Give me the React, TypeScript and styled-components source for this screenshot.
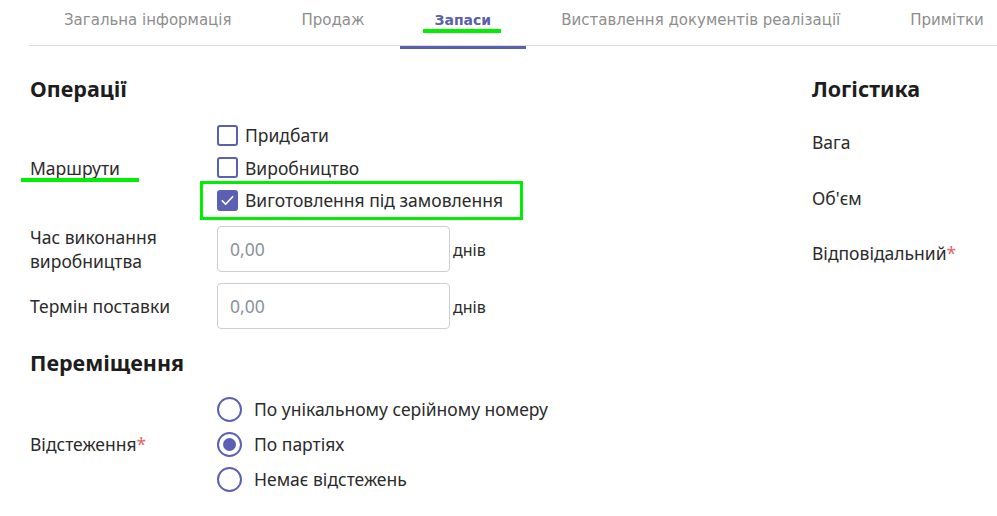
import React from "react";
import styled, { createGlobalStyle } from "styled-components";

const Global = createGlobalStyle`
  html, body { margin: 0; padding: 0; background: #fff; }
  body { font-family: "Noto Sans", "Open Sans", sans-serif; color: #212529; }
  * { box-sizing: border-box; }
`;

const Page = styled.div`
  width: 997px;
  height: 516px;
  overflow: hidden;
  position: relative;
`;

const TabBar = styled.div`
  display: flex;
  margin-left: 29px;
  height: 46px;
  border-bottom: 1px solid #dcdcdc;
`;

const Tab = styled.div<{ $active?: boolean }>`
  position: relative;
  padding: 10px 35px 0;
  height: 46px;
  font-family: "DejaVu Sans", Verdana, sans-serif;
  font-size: ${(p) => (p.$active ? 14 : 15)}px;
  line-height: 20px;
  white-space: nowrap;
  color: ${(p) => (p.$active ? "#5a5fb0" : "#8e8e8e")};
  font-weight: ${(p) => (p.$active ? 700 : 400)};
  ${(p) =>
    p.$active &&
    `&::after { content: ""; position: absolute; left: 0; right: 0; bottom: -3px; height: 3px; background: #5a5fb0; }`}
`;

const GreenLine = styled.span<{ $left: number; $top: number; $width: number }>`
  position: absolute;
  left: ${(p) => p.$left}px;
  top: ${(p) => p.$top}px;
  width: ${(p) => p.$width}px;
  height: 4px;
  background: #00ee00;
`;

const Content = styled.div`
  display: grid;
  grid-template-columns: 782px 1fr;
  padding-left: 30px;
`;

const Column = styled.div`
  display: flex;
  flex-direction: column;
`;

const Heading = styled.h2<{ $mt: number }>`
  margin: ${(p) => p.$mt}px 0 0;
  font-size: 21.5px;
  line-height: 26px;
  font-weight: 700;
  color: #1d1d1d;
  white-space: nowrap;
`;

const FormRow = styled.div<{ $mt: number }>`
  display: grid;
  grid-template-columns: 187px 1fr;
  align-items: center;
  margin-top: ${(p) => p.$mt}px;
`;

const Label = styled.div`
  position: relative;
  font-size: 17.5px;
  line-height: 24px;
  color: #2b2b2b;
  white-space: nowrap;
`;

const Req = styled.span`
  color: #e8646a;
`;

const Options = styled.div<{ $h: number }>`
  display: flex;
  flex-direction: column;
  & > * { height: ${(p) => p.$h}px; }
`;

const OptionRow = styled.label`
  position: relative;
  display: flex;
  align-items: center;
  gap: 7px;
  font-size: 17.5px;
  color: #2b2b2b;
  white-space: nowrap;
`;

const Checkbox = styled.span<{ $checked?: boolean }>`
  width: 21px;
  height: 21px;
  border: 2px solid #5c60b4;
  border-radius: 3px;
  background: ${(p) => (p.$checked ? "#5c60b4" : "#fff")};
  display: flex;
  align-items: center;
  justify-content: center;
`;

const Radio = styled.span<{ $checked?: boolean }>`
  width: 25px;
  height: 25px;
  border: 2px solid #5c60b4;
  border-radius: 50%;
  display: flex;
  align-items: center;
  justify-content: center;
  margin-right: 5px;
  &::after {
    content: "";
    width: 13px;
    height: 13px;
    border-radius: 50%;
    background: ${(p) => (p.$checked ? "#5c60b4" : "transparent")};
  }
`;

const GreenBox = styled.span`
  position: absolute;
  left: -17px;
  top: -3px;
  width: 323px;
  height: 39px;
  border: 3px solid #00ee00;
  pointer-events: none;
`;

const InputWrap = styled.div`
  display: flex;
  align-items: center;
  gap: 3px;
`;

const Input = styled.input`
  width: 233px;
  height: 46px;
  border: 1px solid #cfcfcf;
  border-radius: 4px;
  padding: 0 12px;
  font-family: "Noto Sans", sans-serif;
  font-size: 17.5px;
  color: #2b2b2b;
  &::placeholder { color: #8a929c; }
`;

const Unit = styled.span`
  font-size: 16px;
  color: #2b2b2b;
  margin-top: 2px;
`;

const RightItem = styled.div<{ $mt: number }>`
  margin-top: ${(p) => p.$mt}px;
  font-size: 17.5px;
  line-height: 24px;
  color: #2b2b2b;
  white-space: nowrap;
`;

const Check = () => (
  <svg width="15" height="15" viewBox="0 0 16 16" fill="none">
    <path d="M2.5 8.5l3.5 3.5 7.5-8" stroke="#fff" strokeWidth="1.8" strokeLinecap="round" strokeLinejoin="round" />
  </svg>
);

export default function App() {
  return (
    <Page>
      <Global />
      <TabBar>
        <Tab>Загальна інформація</Tab>
        <Tab>Продаж</Tab>
        <Tab $active>
          Запаси
          <GreenLine $left={23} $top={29} $width={78} />
        </Tab>
        <Tab>Виставлення документів реалізації</Tab>
        <Tab>Примітки</Tab>
      </TabBar>
      <Content>
        <Column>
          <Heading $mt={30}>Операції</Heading>
          <FormRow $mt={17}>
            <Label>
              Маршрути
              <GreenLine $left={-9} $top={22} $width={118} />
            </Label>
            <Options $h={32.5}>
              <OptionRow>
                <Checkbox />
                Придбати
              </OptionRow>
              <OptionRow>
                <Checkbox />
                Виробництво
              </OptionRow>
              <OptionRow>
                <GreenBox />
                <Checkbox $checked>
                  <Check />
                </Checkbox>
                Виготовлення під замовлення
              </OptionRow>
            </Options>
          </FormRow>
          <FormRow $mt={8}>
            <Label>
              Час виконання
              <br />
              виробництва
            </Label>
            <InputWrap>
              <Input placeholder="0,00" />
              <Unit>днів</Unit>
            </InputWrap>
          </FormRow>
          <FormRow $mt={10}>
            <Label>Термін поставки</Label>
            <InputWrap>
              <Input placeholder="0,00" />
              <Unit>днів</Unit>
            </InputWrap>
          </FormRow>
          <Heading $mt={21}>Переміщення</Heading>
          <FormRow $mt={16}>
            <Label>
              Відстеження<Req>*</Req>
            </Label>
            <Options $h={35}>
              <OptionRow>
                <Radio />
                По унікальному серійному номеру
              </OptionRow>
              <OptionRow>
                <Radio $checked />
                По партіях
              </OptionRow>
              <OptionRow>
                <Radio />
                Немає відстежень
              </OptionRow>
            </Options>
          </FormRow>
        </Column>
        <Column>
          <Heading $mt={30}>Логістика</Heading>
          <RightItem $mt={28}>Вага</RightItem>
          <RightItem $mt={32}>Об'єм</RightItem>
          <RightItem $mt={31}>
            Відповідальний<Req>*</Req>
          </RightItem>
        </Column>
      </Content>
    </Page>
  );
}
